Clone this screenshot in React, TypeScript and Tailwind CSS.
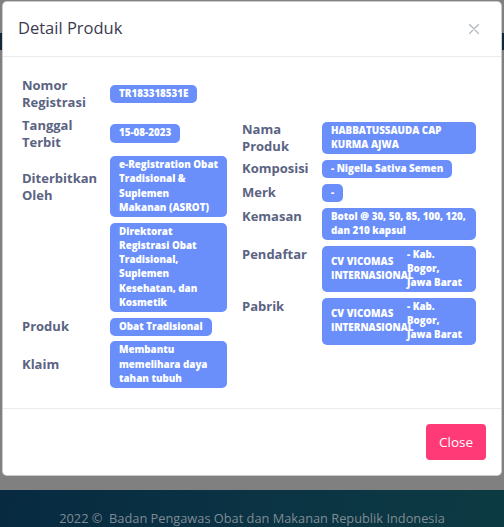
import React from "react";

const badge =
  "bg-[#6a8ffb] text-white font-extrabold text-[9.8px] leading-[14.25px] px-[9px] py-[2px] rounded-[5px] whitespace-nowrap";

function LRow({ label, children }: { label?: React.ReactNode; children: React.ReactNode }) {
  return (
    <div className="flex items-center">
      <div className="w-[88px] shrink-0 text-[13px] font-bold leading-[17px] text-[#5b6382]">{label}</div>
      {children}
    </div>
  );
}

function RRow({ label, children }: { label: React.ReactNode; children: React.ReactNode }) {
  return (
    <div className="flex items-start">
      <div className="w-[80px] shrink-0 text-[13px] font-bold leading-[17px] text-[#5b6382]">{label}</div>
      {children}
    </div>
  );
}

function Company() {
  return (
    <div className={`${badge} w-[154px] flex items-center`}>
      <div className="w-[76px] shrink-0">
        CV VICOMAS
        <br />
        INTERNASIONAL
      </div>
      <div>
        - Kab.
        <br />
        Bogor,
        <br />
        Jawa Barat
      </div>
    </div>
  );
}

export default function App() {
  return (
    <div className="relative h-[527px] w-[504px] overflow-hidden font-['Open_Sans',sans-serif]">
      {/* dimmed page underneath */}
      <div className="flex h-full flex-col bg-[#808080]">
        <div className="h-[33px]" />
        <div className="h-[17px] bg-[#13273a]" />
        <div className="flex-1" />
        <div className="flex h-[37px] items-center justify-center bg-[linear-gradient(100deg,#072a40_0%,#0b3344_50%,#0c3a42_100%)] pt-[20px] text-[12.8px] text-[#7f8b94]">
          2022 ©&nbsp; Badan Pengawas Obat dan Makanan Republik Indonesia
        </div>
      </div>

      {/* modal */}
      <div className="absolute left-[2px] top-[1px] w-[500px] rounded-[5px] border border-black/20 bg-white">
        <div className="flex h-[55px] items-center justify-between border-b border-[#e9ecef] pl-[15px] pr-[22px]">
          <div className="mb-[4px] text-[16.5px] leading-[25px] text-[#3b3b50]">Detail Produk</div>
          <svg width="10" height="10" viewBox="0 0 10 10">
            <path d="M0.5 0.5 L9.5 9.5 M9.5 0.5 L0.5 9.5" stroke="#b4b8c2" strokeWidth="1.4" strokeLinecap="round" />
          </svg>
        </div>

        <div className="flex items-center py-[20px] pl-[19px]">
          <div className="flex w-[220px] shrink-0 flex-col gap-[5.5px]">
            <LRow
              label={
                <>
                  Nomor
                  <br />
                  Registrasi
                </>
              }
            >
              <div className={badge}>TR183318531E</div>
            </LRow>
            <LRow
              label={
                <>
                  Tanggal
                  <br />
                  Terbit
                </>
              }
            >
              <div className={badge}>15-08-2023</div>
            </LRow>
            <LRow
              label={
                <>
                  Diterbitkan
                  <br />
                  Oleh
                </>
              }
            >
              <div className={`${badge} w-[117px]`}>
                e-Registration Obat
                <br />
                Tradisional &amp;
                <br />
                Suplemen
                <br />
                Makanan (ASROT)
              </div>
            </LRow>
            <LRow>
              <div className={`${badge} w-[117px]`}>
                Direktorat
                <br />
                Registrasi Obat
                <br />
                Tradisional,
                <br />
                Suplemen
                <br />
                Kesehatan, dan
                <br />
                Kosmetik
              </div>
            </LRow>
            <LRow label="Produk">
              <div className={badge}>Obat Tradisional</div>
            </LRow>
            <LRow label="Klaim">
              <div className={`${badge} w-[117px]`}>
                Membantu
                <br />
                memelihara daya
                <br />
                tahan tubuh
              </div>
            </LRow>
          </div>

          <div className="flex flex-col gap-[5.5px]">
            <RRow
              label={
                <>
                  Nama
                  <br />
                  Produk
                </>
              }
            >
              <div className={`${badge} mt-[1px] w-[154px]`}>
                HABBATUSSAUDA CAP
                <br />
                KURMA AJWA
              </div>
            </RRow>
            <RRow label="Komposisi">
              <div className={badge}>- Nigella Sativa Semen</div>
            </RRow>
            <RRow label="Merk">
              <div className={badge}>-</div>
            </RRow>
            <RRow label="Kemasan">
              <div className={`${badge} w-[154px]`}>
                Botol @ 30, 50, 85, 100, 120,
                <br />
                dan 210 kapsul
              </div>
            </RRow>
            <RRow label="Pendaftar">
              <Company />
            </RRow>
            <RRow label="Pabrik">
              <Company />
            </RRow>
          </div>
        </div>

        <div className="flex justify-end border-t border-[#e9ecef] py-[15px] pr-[15px]">
          <button className="flex h-[36px] w-[60px] items-center justify-center rounded-[4px] bg-[#ff3a77] text-[13.5px] font-medium text-white">
            Close
          </button>
        </div>
      </div>
    </div>
  );
}
